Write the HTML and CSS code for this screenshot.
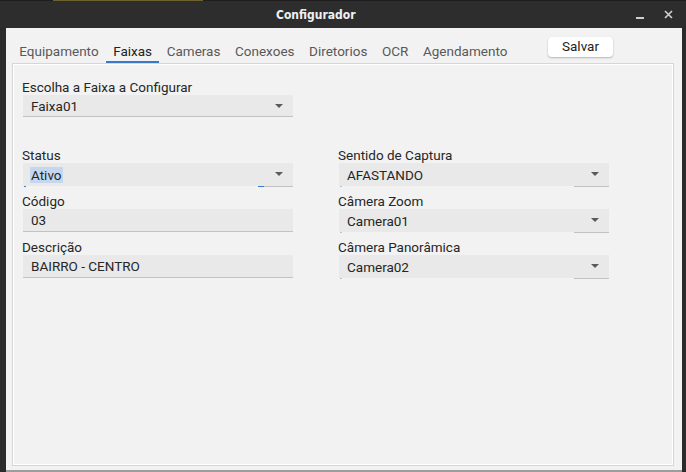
FILE: index.html
```html
<!DOCTYPE html>
<html lang="pt">
<head>
<meta charset="utf-8">
<title>Configurador</title>
<link rel="stylesheet" href="styles.css">
</head>
<body>
<div class="strip"><span class="strip-accent"></span></div>
<header class="titlebar">
  <div class="tb-title">Configurador</div>
  <div class="tb-controls">
    <span class="tb-min"></span>
    <svg class="tb-close" width="9" height="9" viewBox="0 0 9 9"><path d="M1 1L8 8M8 1L1 8" stroke="#d0d0d0" stroke-width="1.6"/></svg>
  </div>
</header>
<main class="frame">
  <nav class="tabbar">
    <span class="tab">Equipamento</span>
    <span class="tab active">Faixas</span>
    <span class="tab">Cameras</span>
    <span class="tab">Conexoes</span>
    <span class="tab">Diretorios</span>
    <span class="tab">OCR</span>
    <span class="tab">Agendamento</span>
    <button class="save">Salvar</button>
  </nav>
  <section class="panel">
    <div class="group first">
      <label class="lbl">Escolha a Faixa a Configurar</label>
      <div class="field combo full"><span>Faixa01</span><i class="arrow"></i></div>
    </div>
    <div class="grid">
      <div class="col">
        <div class="group">
          <label class="lbl">Status</label>
          <div class="field combo partial focus"><span class="sel">Ativo</span><i class="arrow"></i></div>
        </div>
        <div class="group">
          <label class="lbl">Código</label>
          <div class="field full"><span>03</span></div>
        </div>
        <div class="group">
          <label class="lbl">Descrição</label>
          <div class="field full"><span>BAIRRO - CENTRO</span></div>
        </div>
      </div>
      <div class="col">
        <div class="group">
          <label class="lbl">Sentido de Captura</label>
          <div class="field combo partial"><span>AFASTANDO</span><i class="arrow"></i></div>
        </div>
        <div class="group">
          <label class="lbl">Câmera Zoom</label>
          <div class="field combo partial"><span>Camera01</span><i class="arrow"></i></div>
        </div>
        <div class="group">
          <label class="lbl">Câmera Panorâmica</label>
          <div class="field combo partial"><span>Camera02</span><i class="arrow"></i></div>
        </div>
      </div>
    </div>
  </section>
</main>
<div class="bottom"></div>
</body>
</html>
```
FILE: styles.css
```css
* { box-sizing: border-box; }
html, body { margin: 0; padding: 0; }
body {
  width: 686px;
  height: 472px;
  background: #2b2b2b;
  font-family: Roboto, "Liberation Sans", sans-serif;
  font-size: 13.5px;
  color: #262626;
  overflow: hidden;
}
.strip { height: 1px; background: #1e1e1e; display: flex; }
.strip-accent { margin-left: 53px; width: 150px; background: #6e6130; }
.titlebar {
  height: 27px;
  display: flex;
  align-items: center;
  background: #2d2d2d;
  padding-left: 276px;
}
.tb-title {
  font-family: "DejaVu Sans", sans-serif;
  font-stretch: condensed;
  font-weight: bold;
  font-size: 12px;
  color: #f0f0f0;
}
.tb-controls {
  margin-left: auto;
  display: flex;
  align-items: center;
  gap: 20px;
  padding-right: 13px;
}
.tb-min { width: 8px; height: 2px; background: #d0d0d0; margin-top: 7px; }
.tb-close { display: block; }
.frame {
  margin: 0 4px 0 6px;
  height: 442px;
  background: #f2f2f2;
  display: flex;
  flex-direction: column;
  padding: 0 8px 4px 6px;
}
.tabbar {
  height: 35px;
  display: flex;
  align-items: flex-end;
  padding-left: 0;
}
.tab {
  padding: 0 7.3px 2px;
  color: #595959;
  font-size: 13.5px;
  line-height: 16px;
  border-bottom: 2px solid transparent;
}
.tab.active { color: #222; border-bottom-color: #3a78c8; }
.save {
  align-self: flex-start;
  margin-top: 9px;
  margin-left: auto;
  margin-right: 61px;
  width: 65px;
  height: 20px;
  border: none;
  border-radius: 4px;
  background: #fff;
  box-shadow: 0 1px 2px rgba(0,0,0,0.25);
  font-family: Roboto, "Liberation Sans", sans-serif;
  font-size: 13.5px;
  color: #222;
  padding: 0 0 2px;
}
.panel {
  flex: 1;
  border: 1px solid #d6d6d6;
  box-shadow: inset 1px 1px 0 #fff, inset -1px -1px 0 #fff;
  padding: 15px 9px 0;
}
.group { display: flex; flex-direction: column; margin-bottom: 7px; }
.group.first { width: 271px; margin-bottom: 30px; }
.lbl { line-height: 16px; height: 16px; }
.field {
  position: relative;
  margin-left: 1px;
  height: 23px;
  background: #e9e9e9;
  display: flex;
  align-items: center;
  padding-left: 8px;
  line-height: 16px;
}
.field.full { border-bottom: 1px solid #c2c2c2; }
.group.first .field { height: 22px; }
.field.partial::before {
  content: "";
  position: absolute;
  left: 1px; bottom: -1px;
  width: 2px; height: 1px;
  background: #c2c2c2;
}
.field.partial::after {
  content: "";
  position: absolute;
  right: 0; bottom: -1px;
  width: 35px; height: 1px;
  background: #c2c2c2;
}
.field.focus::before { background: #3a78c8; }
.field.focus::after { background: linear-gradient(to right, #3a78c8 0 6px, #c2c2c2 6px); }
.sel { background: #c5d7ef; margin-left: -1px; padding: 0 1px; }
.arrow {
  position: absolute;
  right: 10px;
  top: 9px;
  width: 0; height: 0;
  border-left: 4px solid transparent;
  border-right: 4px solid transparent;
  border-top: 4px solid #5a5a5a;
}
.grid {
  display: grid;
  grid-template-columns: 271px 271px;
  column-gap: 45px;
}
.bottom { height: 2px; margin: 0 4px 0 6px; background: #9c9c9c; }
```
